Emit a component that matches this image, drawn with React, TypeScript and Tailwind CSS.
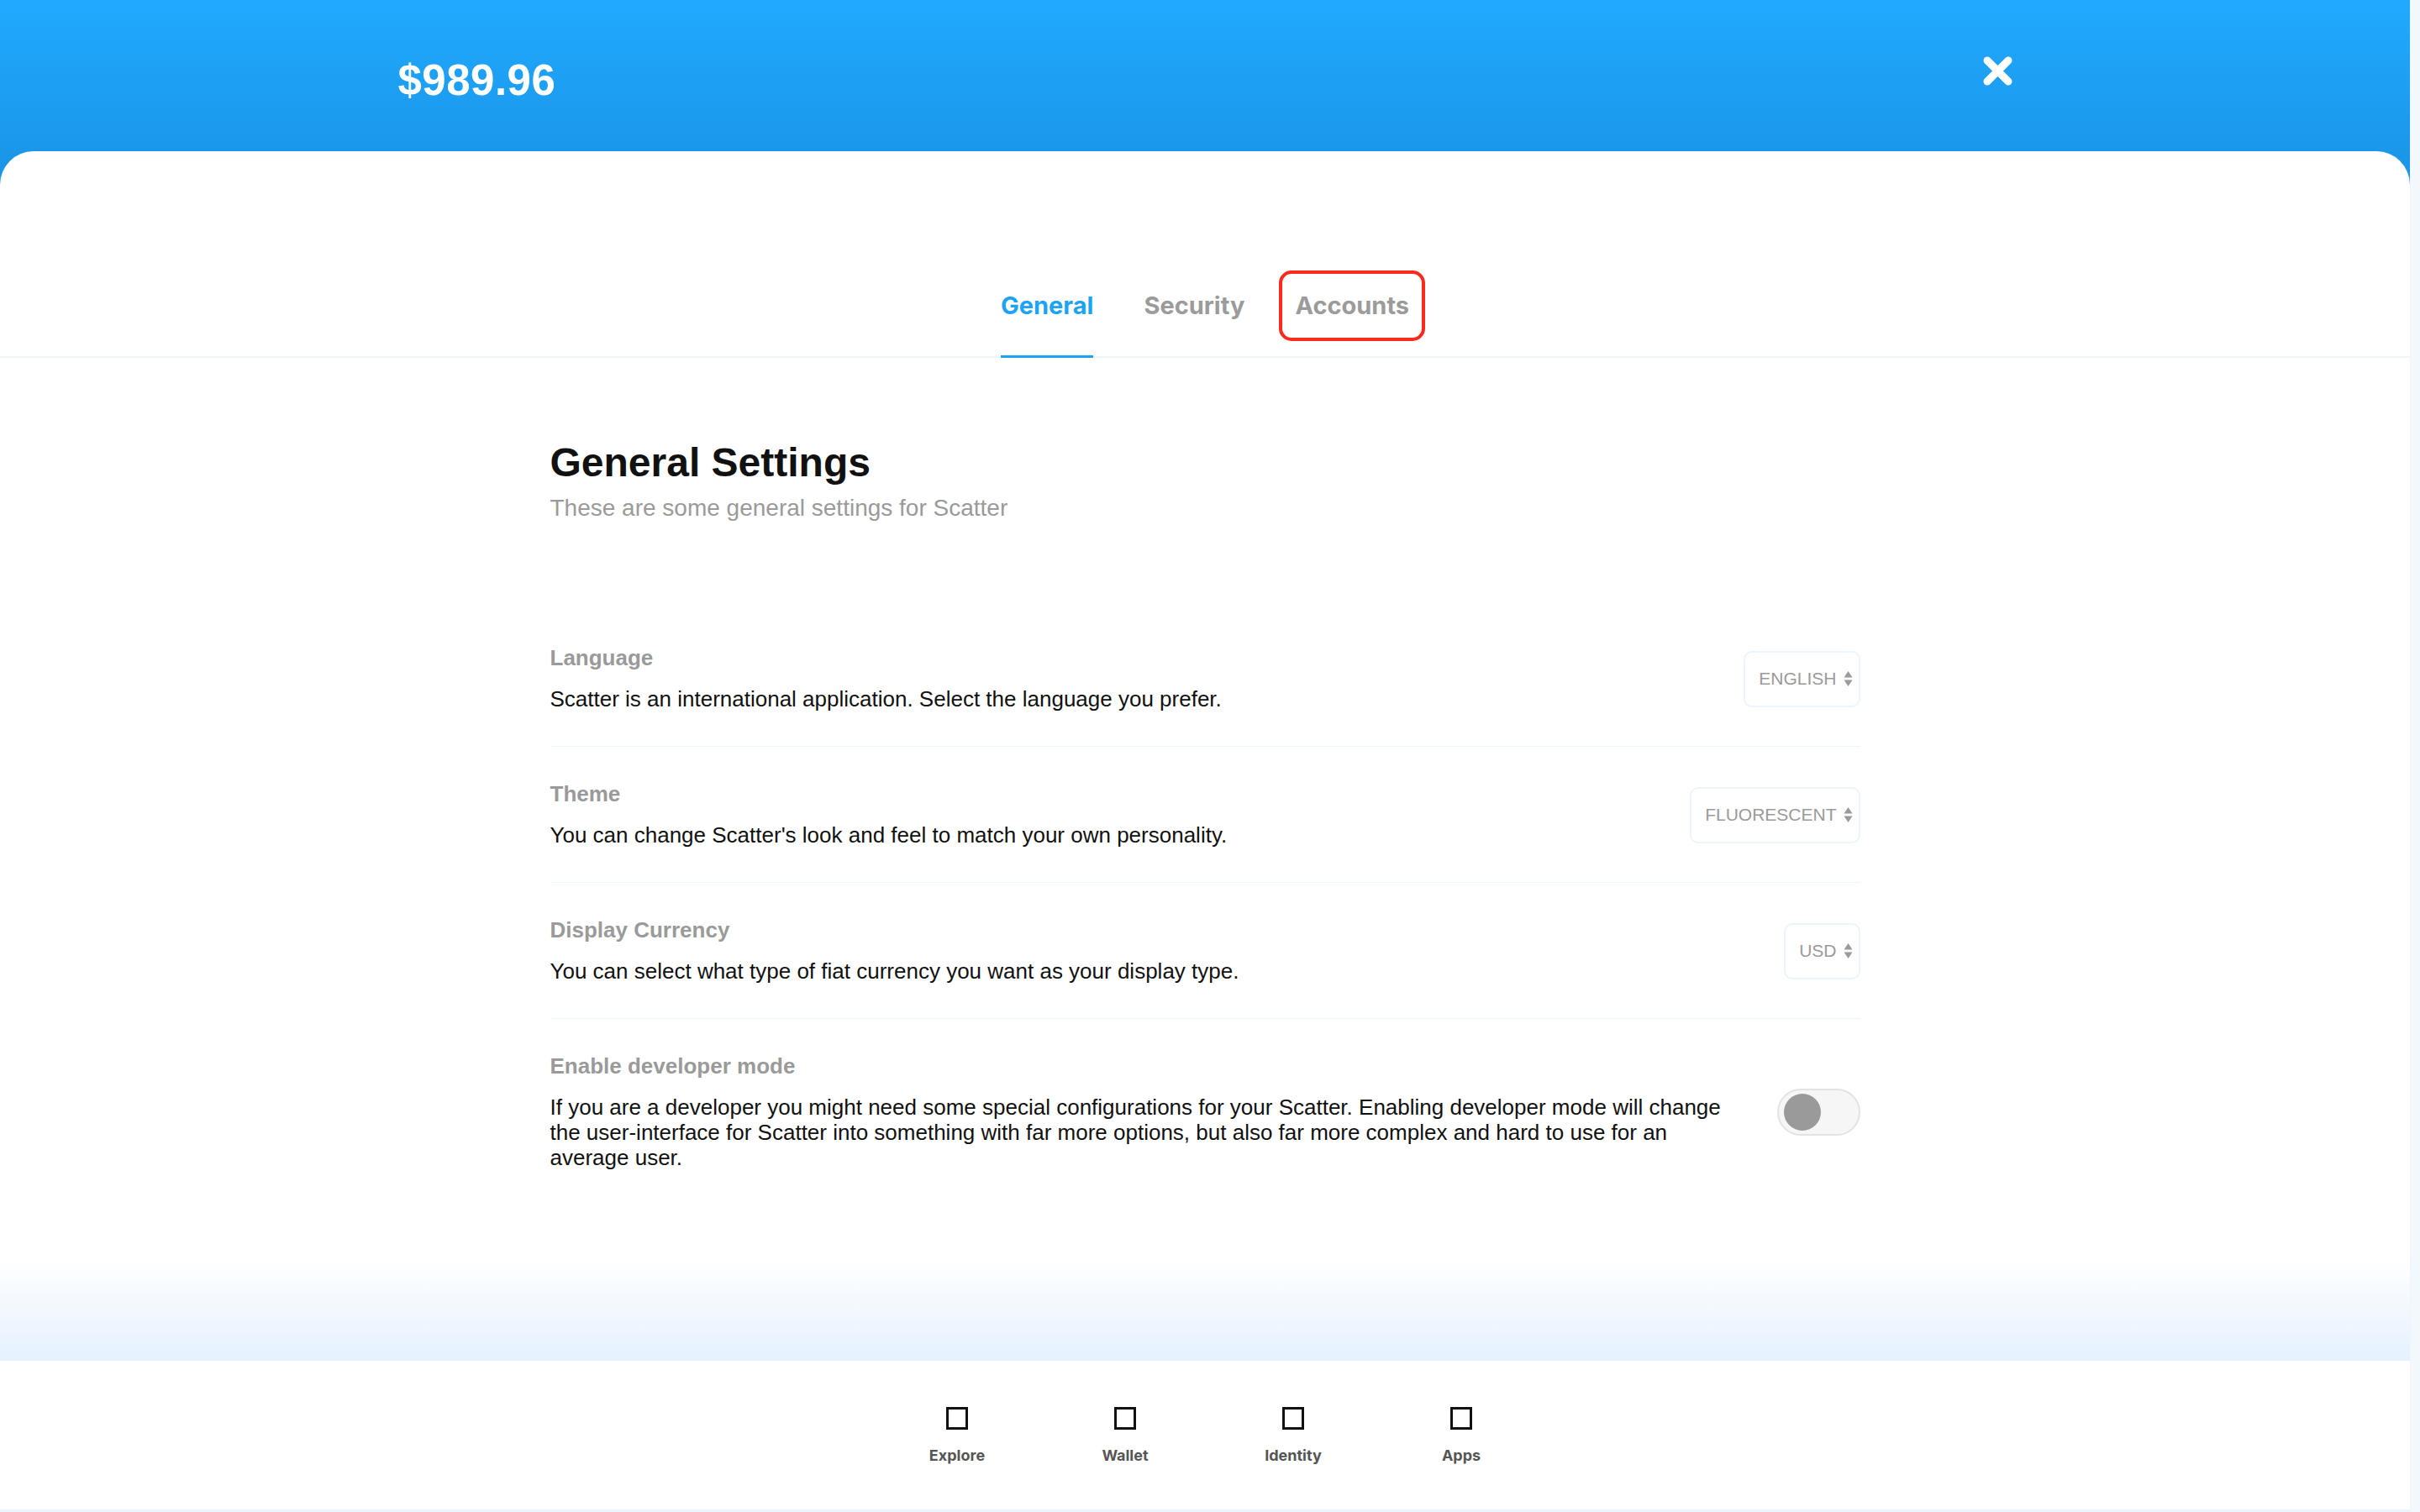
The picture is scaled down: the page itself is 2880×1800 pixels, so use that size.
import React from "react";

const rows = [
  {
    title: "Language",
    text: "Scatter is an international application. Select the language you prefer.",
    select: "ENGLISH",
  },
  {
    title: "Theme",
    text: "You can change Scatter's look and feel to match your own personality.",
    select: "FLUORESCENT",
  },
  {
    title: "Display Currency",
    text: "You can select what type of fiat currency you want as your display type.",
    select: "USD",
  },
];

const navItems = ["Explore", "Wallet", "Identity", "Apps"];

function SortArrows() {
  return (
    <svg width="11" height="20" viewBox="0 0 11 20" className="shrink-0">
      <path d="M5.5 1 L10.5 8.5 L0.5 8.5 Z" fill="#9a9a9a" />
      <path d="M5.5 19 L10.5 11.5 L0.5 11.5 Z" fill="#9a9a9a" />
    </svg>
  );
}

function Select({ value }: { value: string }) {
  return (
    <div className="flex h-[67px] shrink-0 items-center gap-[8px] rounded-[10px] border-2 border-[#eaf5fe] pl-[16px] pr-[7px] text-[21px] text-[#9a9a9a]">
      <span>{value}</span>
      <SortArrows />
    </div>
  );
}

function Toggle() {
  return (
    <div className="flex h-[56px] w-[99px] shrink-0 items-center rounded-full border-2 border-[#e3e3e3] bg-[#f6f6f6] pl-[6px]">
      <div className="h-[44px] w-[44px] rounded-full bg-[#9a9a9a]" />
    </div>
  );
}

function Row({
  title,
  children,
  right,
  last,
}: {
  title: string;
  children: React.ReactNode;
  right: React.ReactNode;
  last?: boolean;
}) {
  return (
    <div
      className={
        "flex items-center justify-between gap-[60px] pb-[41px] pt-[42px] " +
        (last ? "" : "border-b border-[#eef6fd]")
      }
    >
      <div className="flex-1">
        <div className="text-[26px] font-bold leading-[28px] text-[#9a9a9a]">{title}</div>
        <div className="mt-[20px] text-[26px] leading-[30px] text-[#111]">{children}</div>
      </div>
      {right}
    </div>
  );
}

export default function App() {
  return (
    <div className="flex h-[1800px] w-full overflow-hidden bg-white font-['Liberation_Sans',Arial,sans-serif]">
      <div className="flex flex-1 flex-col">
        {/* header */}
        <div className="h-[220px] shrink-0 bg-[linear-gradient(180deg,#20aaff_0%,#1b97ea_82%,#1a95e8_100%)]">
          <div className="mx-auto flex w-[1921px] items-start justify-between pt-[67px]">
            <div className="mt-[3px] text-[51px] font-bold leading-[52px] tracking-[0.5px] text-white">
              $989.96
            </div>
            <svg width="35" height="35" viewBox="0 0 35 35">
              <path
                d="M5 5 L30 30 M30 5 L5 30"
                stroke="#fff"
                strokeWidth="9"
                strokeLinecap="round"
              />
            </svg>
          </div>
        </div>

        {/* card */}
        <div className="relative -mt-[40px] flex flex-1 flex-col rounded-t-[40px] bg-white">
          {/* tabs */}
          <div className="flex justify-center gap-[60px] border-b-2 border-[#eef6fd] pt-[167px] font-['Inter',sans-serif] text-[29px] font-bold leading-[34px]">
            <div className="relative pb-[43px] text-[#1ba4f5]">
              General
              <div className="absolute -bottom-[2px] left-0 right-0 h-[3px] bg-[#1ba4f5]" />
            </div>
            <div className="pb-[43px] text-[#9b9b9b]">Security</div>
            <div className="relative pb-[43px] text-[#9b9b9b]">
              Accounts
              <div className="absolute -left-[19px] -right-[19px] -top-[25px] bottom-[18px] rounded-[15px] border-[4px] border-[#fb2a1c]" />
            </div>
          </div>

          {/* settings */}
          <div className="mx-auto w-[1559px] pt-[97px]">
            <h1 className="text-[48px] font-bold leading-[56px] text-[#111]">General Settings</h1>
            <p className="mt-[9px] text-[28px] leading-[34px] text-[#9a9a9a]">
              These are some general settings for Scatter
            </p>

            <div className="mt-[105px]">
              {rows.map((r) => (
                <Row key={r.title} title={r.title} right={<Select value={r.select} />}>
                  {r.text}
                </Row>
              ))}
              <Row title="Enable developer mode" right={<Toggle />} last>
                If you are a developer you might need some special configurations for your Scatter.
                Enabling developer mode will change the user-interface for Scatter into something with
                far more options, but also far more complex and hard to use for an average user.
              </Row>
            </div>
          </div>

          <div className="flex-1" />

          {/* fade */}
          <div className="h-[120px] shrink-0 bg-gradient-to-b from-white to-[#e5f1fd]" />

          {/* bottom nav */}
          <div className="flex h-[180px] shrink-0 justify-center border-b-[3px] border-[#eaf4fd] bg-white pl-[10px]">
            {navItems.map((n) => (
              <div key={n} className="flex w-[200px] flex-col items-center pt-[55px]">
                <div className="h-[27px] w-[26px] border-[3px] border-[#111]" />
                <div className="mt-[20px] font-['Inter',sans-serif] text-[18px] font-bold leading-[22px] text-[#555]">
                  {n}
                </div>
              </div>
            ))}
          </div>
        </div>
      </div>

      {/* scrollbar track */}
      <div className="w-[12px] shrink-0 border-l border-[#eef4fb] bg-[#f3f8fd]" />
    </div>
  );
}
